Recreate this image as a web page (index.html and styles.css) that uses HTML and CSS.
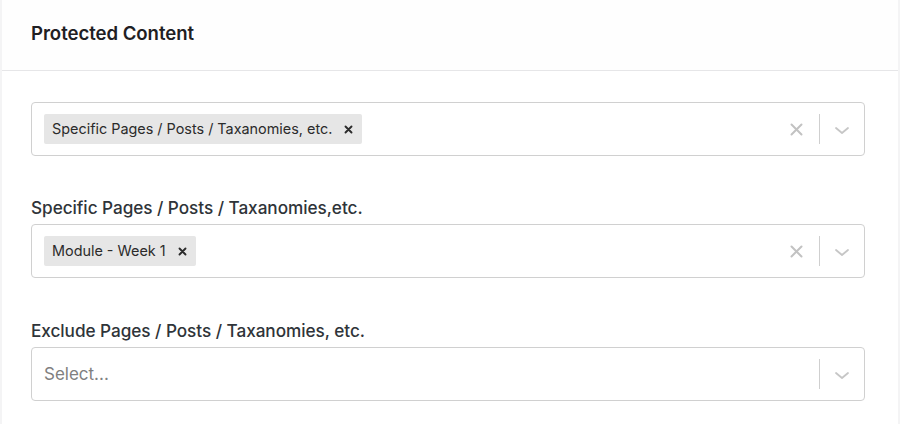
FILE: index.html
```html
<!DOCTYPE html>
<html>
<head>
<meta charset="utf-8">
<link rel="stylesheet" href="styles.css">
</head>
<body>
<div class="panel">
  <header class="panel-header">
    <h2 class="panel-title">Protected Content</h2>
  </header>
  <div class="panel-body">
    <div class="field field-first">
      <div class="select">
        <div class="values">
          <span class="tag"><span class="tag-label">Specific Pages / Posts / Taxanomies, etc.</span><span class="tag-remove"><svg width="9" height="9" viewBox="0 0 9 9"><path d="M1.5 1.5 L7.5 7.5 M7.5 1.5 L1.5 7.5" stroke="#2b2b2b" stroke-width="1.9" stroke-linecap="round"/></svg></span></span>
        </div>
        <div class="indicators">
          <span class="clear"><svg width="13" height="13" viewBox="0 0 13 13"><path d="M1.5 1.5 L11.5 11.5 M11.5 1.5 L1.5 11.5" stroke="#c2c2c2" stroke-width="2" stroke-linecap="round"/></svg></span>
          <span class="sep"></span>
          <span class="drop"><svg width="16" height="9" viewBox="0 0 16 9"><path d="M2 2 L8 7 L14 2" fill="none" stroke="#c6c6c6" stroke-width="1.8" stroke-linecap="round" stroke-linejoin="round"/></svg></span>
        </div>
      </div>
    </div>
    <div class="field">
      <label class="label">Specific Pages / Posts / Taxanomies,etc.</label>
      <div class="select">
        <div class="values">
          <span class="tag"><span class="tag-label">Module - Week 1</span><span class="tag-remove"><svg width="9" height="9" viewBox="0 0 9 9"><path d="M1.5 1.5 L7.5 7.5 M7.5 1.5 L1.5 7.5" stroke="#2b2b2b" stroke-width="1.9" stroke-linecap="round"/></svg></span></span>
        </div>
        <div class="indicators">
          <span class="clear"><svg width="13" height="13" viewBox="0 0 13 13"><path d="M1.5 1.5 L11.5 11.5 M11.5 1.5 L1.5 11.5" stroke="#c2c2c2" stroke-width="2" stroke-linecap="round"/></svg></span>
          <span class="sep"></span>
          <span class="drop"><svg width="16" height="9" viewBox="0 0 16 9"><path d="M2 2 L8 7 L14 2" fill="none" stroke="#c6c6c6" stroke-width="1.8" stroke-linecap="round" stroke-linejoin="round"/></svg></span>
        </div>
      </div>
    </div>
    <div class="field field-last">
      <label class="label">Exclude Pages / Posts / Taxanomies, etc.</label>
      <div class="select">
        <div class="values">
          <span class="placeholder">Select...</span>
        </div>
        <div class="indicators">
          <span class="sep"></span>
          <span class="drop"><svg width="16" height="9" viewBox="0 0 16 9"><path d="M2 2 L8 7 L14 2" fill="none" stroke="#c6c6c6" stroke-width="1.8" stroke-linecap="round" stroke-linejoin="round"/></svg></span>
        </div>
      </div>
    </div>
  </div>
</div>
</body>
</html>
```
FILE: styles.css
```css
html, body {
  margin: 0;
  padding: 0;
  background: #ffffff;
}
body {
  font-family: Inter, "Noto Sans", "Liberation Sans", sans-serif;
  color: #1e1e1e;
}
.panel {
  width: 900px;
  height: 424px;
  border-left: 2px solid #f4f4f5;
  border-right: 2px solid #f4f4f5;
  box-sizing: border-box;
}
.panel-header {
  height: 71px;
  border-bottom: 1px solid #e6e6e8;
  box-sizing: border-box;
  display: flex;
  align-items: flex-start;
  padding: 23px 0 0 29px;
  background: #fefefe;
}
.panel-title {
  margin: 0;
  font-size: 18.6px;
  font-weight: 600;
  line-height: 20px;
  color: #1f2023;
  letter-spacing: -0.05px;
}
.panel-body {
  padding: 0 33px 0 29px;
  display: flex;
  flex-direction: column;
}
.field {
  display: flex;
  flex-direction: column;
  margin-top: 42px;
}
.field-first {
  margin-top: 31px;
}
.field-last {
  margin-top: 43px;
}
.label {
  font-size: 17.2px;
  font-weight: 500;
  line-height: 20px;
  color: #2f3439;
  margin-bottom: 6px;
  letter-spacing: -0.05px;
}
.select {
  display: flex;
  align-items: center;
  height: 54px;
  box-sizing: border-box;
  border: 1px solid #d0d0d0;
  border-radius: 4px;
  background: #fff;
}
.values {
  flex: 1;
  display: flex;
  align-items: center;
  padding-left: 12px;
}
.tag {
  display: inline-flex;
  align-items: center;
  height: 30px;
  background: #e6e6e6;
  border-radius: 2px;
  padding: 0 9px 0 8px;
}
.tag-label {
  font-size: 14.4px;
  color: #2b2b2b;
  line-height: 18px;
}
.tag-remove {
  display: inline-flex;
  align-items: center;
  margin-left: 12px;
}
.placeholder {
  font-size: 17px;
  color: #808080;
}
.indicators {
  display: flex;
  align-items: center;
  height: 100%;
}
.clear {
  width: 46px;
  display: flex;
  justify-content: center;
  align-items: center;
}
.sep {
  width: 1px;
  height: 30px;
  background: #cfcfcf;
}
.drop {
  width: 44px;
  display: flex;
  justify-content: center;
  align-items: center;
  padding-top: 2px;
}
```
